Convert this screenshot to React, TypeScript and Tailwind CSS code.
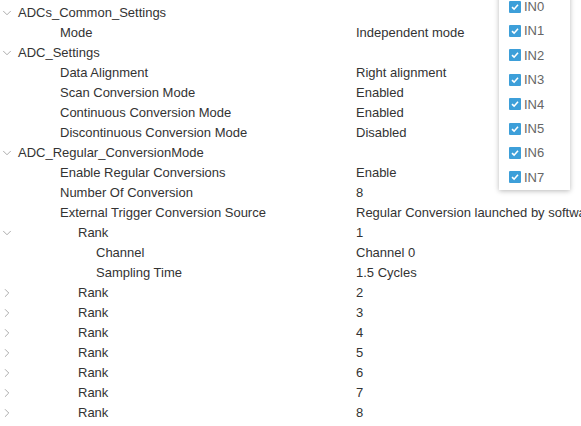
import { ChevronDown, ChevronRight } from 'lucide-react';

type Row = {
  label: string;
  value?: string;
  indent: string;
  chevron?: 'down' | 'right';
};

const ROWS: Row[] = [
  { label: 'ADCs_Common_Settings', indent: 'pl-[4px]', chevron: 'down' },
  { label: 'Mode', value: 'Independent mode', indent: 'pl-[60px]' },
  { label: 'ADC_Settings', indent: 'pl-[4px]', chevron: 'down' },
  { label: 'Data Alignment', value: 'Right alignment', indent: 'pl-[60px]' },
  { label: 'Scan Conversion Mode', value: 'Enabled', indent: 'pl-[60px]' },
  { label: 'Continuous Conversion Mode', value: 'Enabled', indent: 'pl-[60px]' },
  { label: 'Discontinuous Conversion Mode', value: 'Disabled', indent: 'pl-[60px]' },
  { label: 'ADC_Regular_ConversionMode', indent: 'pl-[4px]', chevron: 'down' },
  { label: 'Enable Regular Conversions', value: 'Enable', indent: 'pl-[60px]' },
  { label: 'Number Of Conversion', value: '8', indent: 'pl-[60px]' },
  {
    label: 'External Trigger Conversion Source',
    value: 'Regular Conversion launched by software',
    indent: 'pl-[60px]',
  },
  { label: 'Rank', value: '1', indent: 'pl-[64px]', chevron: 'down' },
  { label: 'Channel', value: 'Channel 0', indent: 'pl-[96px]' },
  { label: 'Sampling Time', value: '1.5 Cycles', indent: 'pl-[96px]' },
  { label: 'Rank', value: '2', indent: 'pl-[64px]', chevron: 'right' },
  { label: 'Rank', value: '3', indent: 'pl-[64px]', chevron: 'right' },
  { label: 'Rank', value: '4', indent: 'pl-[64px]', chevron: 'right' },
  { label: 'Rank', value: '5', indent: 'pl-[64px]', chevron: 'right' },
  { label: 'Rank', value: '6', indent: 'pl-[64px]', chevron: 'right' },
  { label: 'Rank', value: '7', indent: 'pl-[64px]', chevron: 'right' },
  { label: 'Rank', value: '8', indent: 'pl-[64px]', chevron: 'right' },
];

const CHANNELS = ['IN0', 'IN1', 'IN2', 'IN3', 'IN4', 'IN5', 'IN6', 'IN7'];

const App = () => {
  return (
    <div
      className="relative w-[581px] h-[426px] overflow-hidden bg-white text-[13px] text-[#333333]"
      style={{ fontFamily: '"Liberation Sans", Arial, sans-serif' }}
    >
      {/* 파라미터 트리 */}
      <div className="flex flex-col pt-[3px]">
        {ROWS.map((row, idx) => (
          <div key={idx} className="grid h-[20px] grid-cols-[356px_1fr] items-center whitespace-nowrap">
            <div className="flex items-center">
              {/* 펼침 아이콘 열: 최상위는 왼쪽에 붙고, Rank는 아이콘이 왼쪽 끝, 글자는 들여쓰기 */}
              {row.chevron ? (
                <>
                  <span className="flex w-[14px] items-center justify-center">
                    {row.chevron === 'down' ? (
                      <ChevronDown size={14} strokeWidth={1.2} className="text-[#8a8a8a]" />
                    ) : (
                      <ChevronRight size={14} strokeWidth={1.2} className="text-[#8a8a8a]" />
                    )}
                  </span>
                  <span className={row.indent}>{row.label}</span>
                </>
              ) : (
                <span className={row.indent}>{row.label}</span>
              )}
            </div>
            <span>{row.value}</span>
          </div>
        ))}
      </div>

      {/* 채널 선택 팝업 */}
      <div className="absolute left-[499px] top-[-6px] flex w-[71px] flex-col bg-white pb-[1px] shadow-[0_1px_5px_rgba(0,0,0,0.28)]">
        {CHANNELS.map((ch) => (
          <div key={ch} className="flex h-[24.4px] items-center gap-[3px] pl-[10px] pt-[1px]">
            <span className="flex h-[12px] w-[12px] items-center justify-center rounded-[1px] bg-[#3d9fd9]">
              <svg width="10" height="10" viewBox="0 0 10 10">
                <path d="M2 5.2 L4.1 7.2 L8 2.8" fill="none" stroke="white" strokeWidth="1.6" />
              </svg>
            </span>
            <span className="text-[13px] text-[#666666]">{ch}</span>
          </div>
        ))}
      </div>
    </div>
  );
};

export default App;
